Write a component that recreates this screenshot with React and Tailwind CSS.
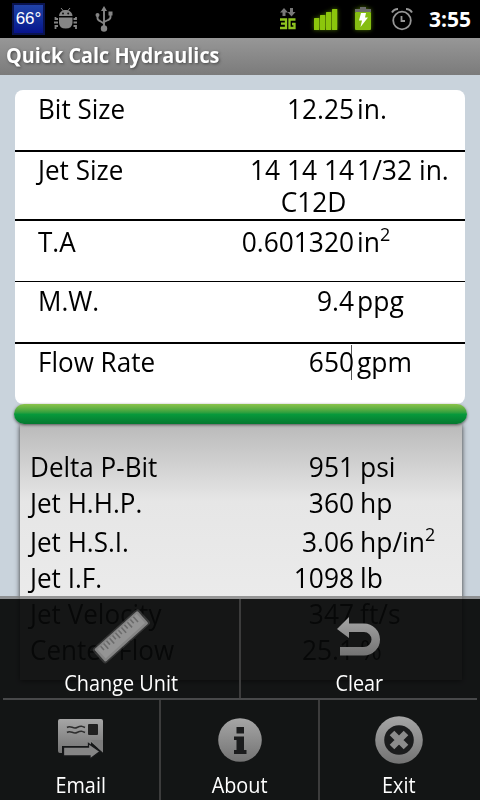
import clsx from 'clsx'

const inputs = [
  { label: 'Bit Size', value: '12.25', unit: 'in.', row: 'h-[62px] pt-[2px] border-b-2' },
  { label: 'Jet Size', value: '14 14 14', unit: '1/32 in.', extra: 'C12D', row: 'h-[69px] pt-[1px] border-b-2' },
  { label: 'T.A', value: '0.601320', unit: 'in', sup: '2', row: 'h-[61px] pt-[4px] border-b' },
  { label: 'M.W.', value: '9.4', unit: 'ppg', row: 'h-[62px] pt-[2px] border-b-2' },
  { label: 'Flow Rate', value: '650', unit: 'gpm', focused: true, row: 'h-[60px] pt-[1px]' },
]

const results = [
  { label: 'Delta P-Bit', value: '951', unit: 'psi', row: 'h-9' },
  { label: 'Jet H.H.P.', value: '360', unit: 'hp', row: 'h-9' },
  { label: 'Jet H.S.I.', value: '3.06', unit: 'hp/in', sup: '2', row: 'h-[39px] pt-[3px]' },
  { label: 'Jet I.F.', value: '1098', unit: 'lb', row: 'h-9' },
  { label: 'Jet Velocity', value: '347', unit: 'ft/s', row: 'h-9' },
  { label: 'Center Flow', value: '25.1', unit: '%', row: 'h-9' },
]

const Gradient = ({ id }) => (
  <defs>
    <linearGradient id={id} x1="0" y1="0" x2="0" y2="1">
      <stop offset="0" stopColor="#a6a6a6" />
      <stop offset="1" stopColor="#737373" />
    </linearGradient>
  </defs>
)

const RulerIcon = () => (
  <svg className="-translate-y-[3px]" width="60" height="60" viewBox="0 0 60 60">
    <g transform="rotate(-42 30 30)">
      <rect x="-1" y="20.500" width="62" height="20" rx="3" fill="#666" opacity=".4" />
      <rect x="1" y="22" width="58" height="17" rx="1.5" fill="#858585" />
      <rect x="3.500" y="24" width="53" height="12.500" fill="#949494" />
      <path d="M8 24v5M12 24v7M16 24v5M20 24v7M24 24v5M28 24v7M32 24v5M36 24v7M40 24v5M44 24v7M48 24v5M52 24v7" stroke="#6b6b6b" strokeWidth="1.6" />
    </g>
  </svg>
)

const UndoIcon = () => (
  <svg className="-translate-y-px" width="46" height="42" viewBox="0 0 46 42">
    <Gradient id="undo" />
    <path d="M1 12L13 0V6.500H28A16 16 0 0 1 28 38.500H4V30H28A7.500 7.500 0 0 0 28 15H13V21Z" fill="url(#undo)" />
  </svg>
)

const EmailIcon = () => (
  <svg className="-translate-y-0.5" width="48" height="42" viewBox="0 0 48 42">
    <Gradient id="mail" />
    <path d="M3 1H44Q46 1 46 3V34.500L34 24V28H5V35H3Q1 35 1 33V3Q1 1 3 1Z" fill="url(#mail)" />
    <path d="M10 9.500C14 7 16 11.500 20 9.500S25 8 28 9.500M10 14.500C14 12 16 16.500 20 14.500S25 13 28 14.500" fill="none" stroke="#2d2d2d" strokeWidth="1.600" />
    <path d="M34 22H46V34.500L42 31Z" fill="#7d7d7d" />
    <rect x="31" y="6" width="10" height="11" rx="1" fill="#222" />
    <path d="M6.500 29H31.500V25.500L43 33.500L33 41V38H6.500Z" fill="#858585" stroke="#17181a" strokeWidth="1.300" />
  </svg>
)

const InfoIcon = () => (
  <svg className="-translate-y-px" width="44" height="44" viewBox="0 0 44 44">
    <Gradient id="info" />
    <circle cx="22" cy="22" r="21.800" fill="url(#info)" />
    <path d="M18.500 9H26V15.500H18.500ZM16 18.500H26V32H28.500V36H16V32H18.500V22H16Z" fill="#1b1c1d" />
  </svg>
)

const ExitIcon = () => (
  <svg className="-translate-y-px" width="48" height="48" viewBox="0 0 48 48">
    <Gradient id="exit" />
    <circle cx="24" cy="24" r="23.800" fill="url(#exit)" />
    <circle cx="24" cy="24" r="14.800" fill="#1b1c1d" />
    <path d="M17 17L31 31M31 17L17 31" stroke="#8c8c8c" strokeWidth="6.500" />
  </svg>
)

const StatusBar = () => (
  <div className="flex h-[38px] items-center bg-black">
    <div className="ml-3 flex h-8 w-[33px] items-center justify-center border-2 border-[#0a1450] bg-linear-to-b from-[#2143a8] to-[#08128c] font-['Liberation_Sans'] text-[17px] text-white">
      66°
    </div>
    <svg className="ml-[9px]" width="24" height="22" viewBox="0 0 24 22" fill="#858585">
      <path d="M5 8C5.500 3 9 2 11.500 2S18 3 18.500 8Z" />
      <path d="M7 0L9.500 3M16 0L13.500 3" stroke="#858585" />
      <path d="M5 9.500H18.500V15Q18 20.500 11.700 20.500T5 15Z" />
      <path d="M4 11H1.500V9M4 14.500H0M4 18H1.500V21M19.500 11H22V9M19.500 14.500H23M19.500 18H22V21" fill="none" stroke="#858585" strokeWidth="1.800" />
      <circle cx="9" cy="5.500" r="1" fill="#111" />
      <circle cx="14.200" cy="5.500" r="1" fill="#111" />
    </svg>
    <svg className="ml-[17px]" width="18" height="26" viewBox="0 0 18 26" fill="#858585">
      <path d="M9 0L12 5H6Z" />
      <circle cx="9" cy="22.500" r="3.200" />
      <circle cx="2.500" cy="9" r="2" />
      <rect x="13.500" y="5.500" width="4" height="4" />
      <path d="M9 4V22M2.500 9V12Q2.500 14 5 15L9 17.500M15.500 8V11Q15.500 13 13 14L9 16" fill="none" stroke="#858585" strokeWidth="1.900" />
    </svg>
    <svg className="ml-[167px]" width="17" height="22" viewBox="0 0 17 22">
      <path d="M4 0L8 4.500H5.500V8H2.500V4.500H0ZM10 0H13V4H15.500L11.500 8.500L7.500 4H10Z" fill="#777" />
      <path d="M0 11.500H6V20H0M1 15.700H6M15.500 11.500H9.500V20H14.500V16H12" fill="none" stroke="#8fc31f" strokeWidth="2.300" />
    </svg>
    <svg className="ml-[16px] drop-shadow-[0_0_2px_#4a7000]" width="26" height="24" viewBox="0 0 26 24" fill="#8cc60c">
      <rect x="1" y="11" width="5.300" height="12" rx=".5" />
      <rect x="7" y="8" width="5.300" height="15" rx=".5" />
      <rect x="13" y="5" width="5.300" height="18" rx=".5" />
      <rect x="19" y="2" width="5.300" height="21" rx=".5" />
    </svg>
    <svg className="ml-[15px] drop-shadow-[0_0_2px_#4a7000]" width="18" height="24" viewBox="0 0 18 24">
      <path d="M1 2H6V0H12V2H17V5H1Z" fill="#6c6c6c" />
      <rect x="1" y="5" width="16" height="18" rx="1" fill="#85bd12" />
      <path d="M7 6H12L11 10.500H14L6.500 20L8 13.500H5Z" fill="#fff" />
    </svg>
    <svg className="ml-[18px]" width="24" height="24" viewBox="0 0 24 24" fill="none" stroke="#969696">
      <circle cx="12" cy="13.500" r="8.800" strokeWidth="1.800" />
      <path d="M2 5.500Q4 2 8 2M22 5.500Q20 2 16 2" strokeWidth="2" />
      <path d="M11.500 9V14H15" strokeWidth="1.800" />
    </svg>
    <span className="ml-[15px] text-[21px] font-bold leading-6 text-white">3:55</span>
  </div>
)

const Unit = ({ item, className }) => (
  <span className={clsx('origin-left scale-x-[.945] whitespace-nowrap', className)}>
    {item.unit}
    {item.sup && <sup className="-top-[11px] text-[19px] leading-none">{item.sup}</sup>}
  </span>
)

const MenuItem = ({ icon, label, className }) => (
  <div className={clsx('flex flex-col items-center', className)}>
    <div className="flex h-[62px] items-center pb-0.5">{icon}</div>
    <span className="scale-x-[.945] whitespace-nowrap text-[21px] leading-6 text-white">{label}</span>
  </div>
)

const App = () => {
  return (
    <div className="relative h-[800px] w-[480px] overflow-hidden bg-[#c9d3dc] font-['Open_Sans','Noto_Sans',sans-serif] text-black">
      <StatusBar />
      <div className="h-[37px] bg-linear-to-b from-[#979797] to-[#7b7b7b] pl-[6px] pt-[3px] text-white">
        <h1 className="w-fit origin-left scale-x-[.943] text-[21px] font-bold leading-7 [text-shadow:1px_1px_3px_#444]">
          Quick Calc Hydraulics
        </h1>
      </div>

      <div className="mx-[15px] mt-[15px] h-[314px] rounded-lg bg-white text-[28px] leading-8">
        {inputs.map((item) => (
          <div key={item.label} className={clsx('flex border-black', item.row)}>
            <span className="ml-[23px] w-[127px] origin-left scale-x-[.93] whitespace-nowrap">{item.label}</span>
            <div className="w-[189px] origin-right scale-x-[.94] text-right">
              <div>{item.value}</div>
              {item.extra && <div className="pr-2">{item.extra}</div>}
            </div>
            {item.focused && <i className="-ml-[3px] mr-[2px] h-[35px] w-px bg-[#555]" />}
            <Unit item={item} className="ml-[3px]" />
          </div>
        ))}
      </div>

      <div className="relative ml-[14px] mr-[13px] h-5 rounded-full bg-linear-to-b from-[#8bc34a] via-[#079a3c] to-[#04782f] shadow-[0_1px_3px_#555]" />
      <div className="ml-5 h-[256px] w-[442px] bg-linear-to-b from-[#bababa] via-[#e6e6e6] via-30% to-[#efefef] pt-[26px] text-[28px] leading-8 shadow-[0_1px_5px_#333]">
        {results.map((item) => (
          <div key={item.label} className={clsx('flex', item.row)}>
            <span className="ml-[10px] w-[150px] origin-left scale-x-[.93] whitespace-nowrap">{item.label}</span>
            <span className="w-[174px] origin-right scale-x-[.94] text-right">{item.value}</span>
            <Unit item={item} className="ml-[6px]" />
          </div>
        ))}
      </div>

      {/* options menu */}
      <div className="absolute inset-x-0 bottom-0 h-[204px]">
        <div className="h-[3px] bg-[#808080]/80" />
        <div className="h-[201px] bg-[#070809]/94 px-[3px]">
          <div className="flex h-[101px] border-b-2 border-[#48494a]">
            <MenuItem icon={<RulerIcon />} label="Change Unit" className="w-[236px] pt-[10px]" />
            <div className="h-[99px] w-[2px] bg-[#3c3c3c]" />
            <MenuItem icon={<UndoIcon />} label="Clear" className="w-[236px] pt-[10px]" />
          </div>
          <div className="flex h-[100px]">
            <MenuItem icon={<EmailIcon />} label="Email" className="w-[156px] pt-[11px]" />
            <div className="w-[2px] shrink-0 bg-[#3c3c3c]" />
            <MenuItem icon={<InfoIcon />} label="About" className="w-[157px] pt-[11px]" />
            <div className="w-[2px] shrink-0 bg-[#3c3c3c]" />
            <MenuItem icon={<ExitIcon />} label="Exit" className="w-[157px] pt-[11px]" />
          </div>
        </div>
      </div>
    </div>
  )
}

export default App
